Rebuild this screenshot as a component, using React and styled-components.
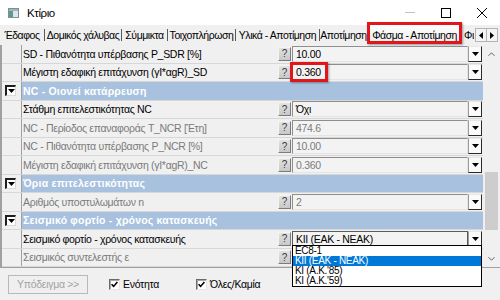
import React from 'react'
import styled, { createGlobalStyle } from 'styled-components'

const UI_FONT = "'Liberation Sans', Arial, sans-serif"

const GlobalStyle = createGlobalStyle`
    html, body {
        margin: 0;
        padding: 0;
        background: #f0f0f0;
    }

    body {
        font-family: ${UI_FONT};
        font-size: 10.5px;
        letter-spacing: -0.3px;
        color: #000;
    }

    * {
        box-sizing: border-box;
    }
`

const Window = styled.div`
    position: relative;
    width: 500px;
    height: 300px;
    display: flex;
    flex-direction: column;
    background: #f0f0f0;
    overflow: hidden;
`

const TitleBar = styled.div`
    flex: none;
    height: 25px;
    display: flex;
    align-items: center;
    padding-left: 8px;
    background: #fff;
`

const Title = styled.div`
    flex: 1;
    margin-left: 8px;
    font-size: 11.5px;
    letter-spacing: -0.4px;
`

const WinButton = styled.div`
    width: 36px;
    height: 25px;
    display: flex;
    align-items: center;
    justify-content: center;
`

const TabStrip = styled.div`
    flex: none;
    height: 20px;
    display: flex;
    align-items: center;
    letter-spacing: -0.45px;
`

const Tab = styled.div`
    flex: none;
    width: ${p => p.$w}px;
    height: 100%;
    display: flex;
    align-items: center;
    justify-content: ${p => (p.$clip ? 'flex-start' : 'center')};
    padding-left: ${p => (p.$clip ? '2px' : '0')};
    white-space: nowrap;
    overflow: hidden;
`

const ActiveTab = styled.div`
    position: relative;
    flex: none;
    width: ${p => p.$w}px;
    height: 100%;
    display: flex;
    align-items: center;
    justify-content: center;
    white-space: nowrap;
    background: linear-gradient(#fdfdfd, #ececec);
`

const TabDivider = styled.span`
    flex: none;
    width: 1px;
    height: 12px;
    background: #5a5a5a;
`

const TabArrows = styled.div`
    flex: none;
    display: flex;
    margin-left: 1px;
`

const ArrowButton = styled.div`
    width: 12px;
    height: 14px;
    display: flex;
    align-items: center;
    justify-content: center;
    background: #f4f4f4;
    border: 1px solid #b4b4b4;
    margin-left: ${p => (p.$first ? '0' : '-1px')};
`

const Mark = styled.div`
    position: absolute;
    top: ${p => p.$top}px;
    bottom: ${p => p.$bottom}px;
    left: ${p => p.$left}px;
    width: ${p => (p.$width ? `${p.$width}px` : 'auto')};
    right: ${p => (p.$width ? 'auto' : `${p.$right}px`)};
    border: 3px solid #e1161c;
    box-shadow: 1px 1px 2px rgba(0, 0, 0, 0.35);
    pointer-events: none;
`

const Body = styled.div`
    flex: none;
    height: 222px;
    display: flex;
    border-left: 2px solid #a0a0a0;
`

const Rows = styled.div`
    flex: 1;
    display: grid;
    grid-template-rows: repeat(12, 1fr);
`

const Row = styled.div`
    display: grid;
    grid-template-columns: 20px 256px 14px 176px 14px 1fr;
    align-items: center;
    border-bottom: 1px solid #d7d7d7;
`

const CategoryRow = styled.div`
    display: grid;
    grid-template-columns: 20px 1fr;
    align-items: stretch;
    border-bottom: 1px solid #d7d7d7;
`

const Expander = styled.div`
    align-self: stretch;
    display: flex;
    align-items: center;
    padding-left: 3px;
    border-right: 1px solid #a0a0a0;
`

const Toggle = styled.div`
    width: 11px;
    height: 11px;
    display: flex;
    align-items: center;
    justify-content: center;
    background: #fff;
    border-top: 2px solid #1e1e1e;
    border-left: 2px solid #1e1e1e;
    border-right: 1px solid #d8d8d8;
    border-bottom: 1px solid #d8d8d8;
`

const Label = styled.div`
    padding-left: 1px;
    white-space: nowrap;
    overflow: hidden;
    color: ${p => (p.$disabled ? '#7b7b7b' : '#000')};
`

const CategoryLabel = styled.div`
    display: flex;
    align-items: center;
    padding-left: 1px;
    background: #a7c1de;
    color: #fff;
    font-weight: bold;
    font-size: 10.5px;
    letter-spacing: 0.2px;
    white-space: nowrap;
`

const HelpButton = styled.div`
    width: 13px;
    height: 14px;
    display: flex;
    align-items: center;
    justify-content: center;
    background: linear-gradient(#e2e2e2, #c8c8c8);
    border-top: 1px solid #f4f4f4;
    border-left: 1px solid #f4f4f4;
    border-right: 1px solid #7c7c7c;
    border-bottom: 1px solid #7c7c7c;
    color: #3a3a3a;
    font-size: 10px;
    letter-spacing: 0;
`

const Field = styled.div`
    position: relative;
    height: 16px;
    display: flex;
    align-items: center;
    padding-left: 3px;
    background: #f3f3f3;
    border: 1px solid;
    border-color: ${p => (p.$open ? '#5a5a5a' : '#8e8e8e #e4e4e4 #e4e4e4 #8e8e8e')};
    color: ${p => (p.$disabled ? '#7b7b7b' : '#000')};
    white-space: nowrap;
`

const DropButton = styled.div`
    height: 16px;
    display: flex;
    align-items: center;
    justify-content: center;
    background: #fafafa;
    border-top: 1px solid #e8e8e8;
    border-left: 1px solid #9a9a9a;
    border-right: 1px solid #2a2a2a;
    border-bottom: 1px solid #2a2a2a;
`

const Popup = styled.div`
    position: absolute;
    top: calc(100% - 1px);
    left: -1px;
    width: 190px;
    background: #fff;
    border: 1px solid #000;
    z-index: 2;
`

const PopupItem = styled.div`
    height: 10px;
    line-height: 10px;
    padding-left: 2px;
    font-size: 10px;
    background: ${p => (p.$selected ? '#0078d7' : '#fff')};
    color: ${p => (p.$selected ? '#fff' : '#000')};
    white-space: nowrap;
`

const ScrollBar = styled.div`
    flex: none;
    width: 17px;
    display: flex;
    flex-direction: column;
    background: #f0f0f0;
`

const ScrollArrow = styled.div`
    flex: none;
    height: 17px;
    display: flex;
    align-items: center;
    justify-content: center;
`

const ScrollTrack = styled.div`
    flex: 1;
    display: flex;
    flex-direction: column;
    align-items: center;
`

const Thumb = styled.div`
    flex: none;
    width: 13px;
    height: ${p => p.$height}px;
    margin-top: ${p => p.$offset}px;
    background: #cdcdcd;
`

const Footer = styled.div`
    flex: 1;
    display: flex;
    align-items: center;
    padding-left: 8px;
    border-top: 1px solid #a0a0a0;
`

const FooterButton = styled.div`
    width: 80px;
    height: 19px;
    display: flex;
    align-items: center;
    justify-content: center;
    background: #efefef;
    border: 1px solid #b9b9b9;
    color: #a3a3a3;
`

const CheckLabel = styled.label`
    display: flex;
    align-items: center;
    gap: 3px;
    margin-left: ${p => p.$gap}px;
`

const Box = styled.span`
    width: 11px;
    height: 11px;
    display: flex;
    align-items: center;
    justify-content: center;
    background: #fff;
    border-top: 1px solid #6a6a6a;
    border-left: 1px solid #6a6a6a;
    border-right: 1px solid #e6e6e6;
    border-bottom: 1px solid #e6e6e6;
    box-shadow: inset 1px 1px 0 #a8a8a8;
`

const tabs = [
    { label: 'Έδαφος', w: 44 },
    { label: 'Δομικός χάλυβας', w: 76 },
    { label: 'Σύμμικτα', w: 45 },
    { label: 'Τοιχοπλήρωση', w: 67 },
    { label: 'Υλικά - Αποτίμηση', w: 83 },
    { label: 'Αποτίμηση', w: 47, last: true }
]

const rows = [
    { label: 'SD - Πιθανότητα υπέρβασης P_SDR [%]', value: '10.00' },
    { label: 'Μέγιστη εδαφική επιτάχυνση (γΙ*αgR)_SD', value: '0.360', marked: true },
    { category: 'NC - Οιονεί κατάρρευση' },
    { label: 'Στάθμη επιτελεστικότητας NC', value: 'Όχι' },
    { label: 'NC - Περίοδος επαναφοράς T_NCR [Έτη]', value: '474.6', disabled: true },
    { label: 'NC - Πιθανότητα υπέρβασης P_NCR [%]', value: '10.00', disabled: true },
    { label: 'Μέγιστη εδαφική επιτάχυνση (γΙ*αgR)_NC', value: '0.360', disabled: true },
    { category: 'Όρια επιτελεστικότητας' },
    { label: 'Αριθμός υποστυλωμάτων n', value: '2', disabled: true },
    { category: 'Σεισμικό φορτίο - χρόνος κατασκευής' },
    { label: 'Σεισμικό φορτίο - χρόνος κατασκευής', value: 'KII (EAK - NEAK)', open: true },
    { label: 'Σεισμικός συντελεστής ε', value: '', disabled: true }
]

const options = ['EC8-1', 'KII (EAK - NEAK)', "KI (A.K.'85)", "KI (A.K.'59)"]

const DownTriangle = () => (
    <svg width="7" height="4" viewBox="0 0 7 4">
        <polygon points="0,0 7,0 3.5,4" fill="#000" />
    </svg>
)

const AppIcon = () => (
    <svg width="11" height="10" viewBox="0 0 11 10">
        <rect x="0.5" y="0.5" width="10" height="9" fill="#dfe6ea" stroke="#7f8f99" />
        <rect x="1" y="1" width="9" height="2" fill="#9fb4c2" />
        <rect x="1" y="3" width="4" height="6" fill="#5f9a8c" />
    </svg>
)

const Check = () => (
    <svg width="7" height="7" viewBox="0 0 7 7">
        <path d="M0.6 3.2 L2.6 5.4 L6.4 1" fill="none" stroke="#000" strokeWidth="1.6" />
    </svg>
)

const PropertyRow = ({ row }) => (
    <Row>
        <Expander />
        <Label $disabled={row.disabled}>{row.label}</Label>
        <HelpButton>?</HelpButton>
        <Field $disabled={row.disabled} $open={row.open}>
            {row.value}
            {row.marked ? <Mark $top={-3} $bottom={-3} $left={-3} $width={38} /> : null}
            {row.open ? (
                <Popup>
                    {options.map(o => (
                        <PopupItem key={o} $selected={o === row.value}>
                            {o}
                        </PopupItem>
                    ))}
                </Popup>
            ) : null}
        </Field>
        <DropButton>
            <DownTriangle />
        </DropButton>
    </Row>
)

export default function App() {
    return (
        <Window>
            <GlobalStyle />
            <TitleBar>
                <AppIcon />
                <Title>Κτίριο</Title>
                <WinButton>
                    <svg width="10" height="1" viewBox="0 0 10 1">
                        <rect width="10" height="1" fill="#c2c2c2" />
                    </svg>
                </WinButton>
                <WinButton>
                    <svg width="10" height="10" viewBox="0 0 10 10">
                        <rect x="0.5" y="0.5" width="9" height="9" fill="none" stroke="#000" />
                    </svg>
                </WinButton>
                <WinButton>
                    <svg width="10" height="10" viewBox="0 0 10 10">
                        <path d="M0 0 L10 10 M10 0 L0 10" stroke="#000" strokeWidth="1" />
                    </svg>
                </WinButton>
            </TitleBar>

            <TabStrip>
                {tabs.map(t => (
                    <React.Fragment key={t.label}>
                        <Tab $w={t.w}>{t.label}</Tab>
                        {!t.last ? <TabDivider /> : null}
                    </React.Fragment>
                ))}
                <ActiveTab $w={95}>
                    Φάσμα - Αποτίμηση
                    <Mark $top={-3} $bottom={1} $left={0} $right={0} />
                </ActiveTab>
                <Tab $w={12} $clip>
                    Φιλ
                </Tab>
                <TabArrows>
                    <ArrowButton $first>
                        <svg width="4" height="7" viewBox="0 0 4 7">
                            <polygon points="4,0 4,7 0,3.5" fill="#000" />
                        </svg>
                    </ArrowButton>
                    <ArrowButton>
                        <svg width="4" height="7" viewBox="0 0 4 7">
                            <polygon points="0,0 0,7 4,3.5" fill="#000" />
                        </svg>
                    </ArrowButton>
                </TabArrows>
            </TabStrip>

            <Body>
                <Rows>
                    {rows.map((r, i) =>
                        r.category ? (
                            <CategoryRow key={i}>
                                <Expander>
                                    <Toggle>
                                        <DownTriangle />
                                    </Toggle>
                                </Expander>
                                <CategoryLabel>{r.category}</CategoryLabel>
                            </CategoryRow>
                        ) : (
                            <PropertyRow key={i} row={r} />
                        )
                    )}
                </Rows>
                <ScrollBar>
                    <ScrollArrow>
                        <svg width="7" height="4" viewBox="0 0 7 4">
                            <polyline points="0.5,3.8 3.5,0.8 6.5,3.8" fill="none" stroke="#606060" />
                        </svg>
                    </ScrollArrow>
                    <ScrollTrack>
                        <Thumb $offset={110} $height={58} />
                    </ScrollTrack>
                    <ScrollArrow>
                        <svg width="7" height="4" viewBox="0 0 7 4">
                            <polyline points="0.5,0.2 3.5,3.2 6.5,0.2" fill="none" stroke="#606060" />
                        </svg>
                    </ScrollArrow>
                </ScrollBar>
            </Body>

            <Footer>
                <FooterButton>Υπόδειγμα &gt;&gt;</FooterButton>
                <CheckLabel $gap={21}>
                    <Box>
                        <Check />
                    </Box>
                    Ενότητα
                </CheckLabel>
                <CheckLabel $gap={37}>
                    <Box>
                        <Check />
                    </Box>
                    Όλες/Καμία
                </CheckLabel>
            </Footer>
        </Window>
    )
}
